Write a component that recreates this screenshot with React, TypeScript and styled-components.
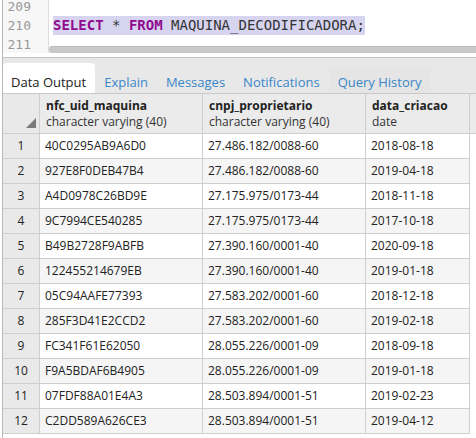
import React from "react";
import styled, { createGlobalStyle } from "styled-components";

const GlobalStyle = createGlobalStyle`
  html, body { margin: 0; padding: 0; background: #ffffff; }
  body { font-family: "Open Sans", "Noto Sans", sans-serif; }
`;

const Page = styled.div`
  margin-left: 2px;
  border-left: 1px solid #b8b8b8;
  height: 438px;
  overflow: hidden;
  display: flex;
  flex-direction: column;
`;

const Editor = styled.div`
  position: relative;
  height: 53px;
  display: flex;
  overflow: hidden;
  flex-shrink: 0;
`;

const Gutter = styled.div`
  width: 45px;
  background: #f7f7f7;
  border-right: 1px solid #dddddd;
  font-family: "DejaVu Sans Mono", "Liberation Mono", monospace;
  font-size: 13px;
  color: #999999;
`;

const GutterLines = styled.div`
  margin-top: -3px;
`;

const LineNo = styled.div`
  height: 19px;
  line-height: 19px;
  width: 28px;
  text-align: right;
`;

const Code = styled.div`
  flex: 1;
  padding-left: 4px;
  font-family: "DejaVu Sans Mono", "Liberation Mono", monospace;
  font-size: 14px;
  color: #333333;
`;

const CodeLines = styled.div`
  margin-top: -3px;
`;

const CodeLine = styled.div`
  height: 19px;
  line-height: 19px;
  white-space: pre;
`;

const Selected = styled.span`
  background: #d7d4f0;
  display: inline-block;
  height: 19px;
`;

const Keyword = styled.span`
  color: #8f0a8f;
  font-weight: bold;
`;

const HScroll = styled.div`
  position: absolute;
  left: 46px;
  right: 0;
  bottom: 0;
  height: 7px;
  background: #c8c8c8;
  border-top: 1px solid #bdbdbd;
  box-sizing: border-box;
  border-radius: 3px 0 0 3px;
`;

const Spacer = styled.div`
  height: 4px;
  flex-shrink: 0;
`;

const TabBar = styled.div`
  border-top: 1px solid #c4c4c4;
  background: #e8e8e8;
  height: 35px;
  display: flex;
  align-items: flex-end;
  flex-shrink: 0;
`;

const Tab = styled.div<{ $active?: boolean; $hover?: boolean }>`
  height: 30px;
  box-sizing: border-box;
  padding: 10px 9px 0 9px;
  line-height: 18px;
  font-size: 13px;
  white-space: nowrap;
  color: ${(p) => (p.$active ? "#222222" : "#3a86c8")};
  background: ${(p) =>
    p.$active
      ? "#ffffff"
      : p.$hover
      ? "linear-gradient(to bottom, transparent 5px, #e5e5e5 5px)"
      : "transparent"};
  border-radius: ${(p) => (p.$active ? "4px 4px 0 0" : "0")};
  padding-left: ${(p) => (p.$active ? "8px" : "9px")};
`;

const Grid = styled.div`
  border-top: 1px solid #c8c8c8;
  display: grid;
  grid-template-columns: 37px 163px 163px 104px 1fr;
  font-size: 12px;
  color: #222222;
`;

const HeadCell = styled.div<{ $filler?: boolean }>`
  background: #ebebeb;
  border-right: ${(p) => (p.$filler ? "none" : "1px solid #cfcfcf")};
  border-bottom: 1px solid #cfcfcf;
  padding: 4px 0 0 6px;
  height: 35px;
  line-height: 16px;
  overflow: hidden;
  white-space: nowrap;
`;

const CornerCell = styled.div`
  background: #e9e9e9;
  border-right: 1px solid #cfcfcf;
  border-bottom: 1px solid #cfcfcf;
  display: flex;
  align-items: flex-end;
  justify-content: flex-end;
  padding: 0 3px 5px 0;
  box-sizing: border-box;
  height: 40px;
`;

const ColName = styled.div`
  font-weight: bold;
`;

const ColType = styled.div`
  color: #333333;
`;

const RowNum = styled.div`
  background: #e9e9e9;
  border-right: 1px solid #cfcfcf;
  border-bottom: 1px solid #cfcfcf;
  height: 24px;
  line-height: 24px;
  text-align: center;
`;

const Cell = styled.div<{ $even: boolean; $filler?: boolean }>`
  background: ${(p) => (p.$filler ? "#ffffff" : p.$even ? "#f5f5f5" : "#ffffff")};
  border-right: ${(p) => (p.$filler ? "none" : "1px solid #cfcfcf")};
  border-bottom: ${(p) => (p.$filler ? "none" : "1px solid #cfcfcf")};
  height: 24px;
  line-height: 24px;
  padding-left: 5px;
  white-space: nowrap;
  overflow: hidden;
`;

const columns = [
  { name: "nfc_uid_maquina", type: "character varying (40)" },
  { name: "cnpj_proprietario", type: "character varying (40)" },
  { name: "data_criacao", type: "date" },
];

const rows: [string, string, string][] = [
  ["40C0295AB9A6D0", "27.486.182/0088-60", "2018-08-18"],
  ["927E8F0DEB47B4", "27.486.182/0088-60", "2019-04-18"],
  ["A4D0978C26BD9E", "27.175.975/0173-44", "2018-11-18"],
  ["9C7994CE540285", "27.175.975/0173-44", "2017-10-18"],
  ["B49B2728F9ABFB", "27.390.160/0001-40", "2020-09-18"],
  ["122455214679EB", "27.390.160/0001-40", "2019-01-18"],
  ["05C94AAFE77393", "27.583.202/0001-60", "2018-12-18"],
  ["285F3D41E2CCD2", "27.583.202/0001-60", "2019-02-18"],
  ["FC341F61E62050", "28.055.226/0001-09", "2018-09-18"],
  ["F9A5BDAF6B4905", "28.055.226/0001-09", "2019-01-18"],
  ["07FDF88A01E4A3", "28.503.894/0001-51", "2019-02-23"],
  ["C2DD589A626CE3", "28.503.894/0001-51", "2019-04-12"],
];

const tabs = ["Data Output", "Explain", "Messages", "Notifications", "Query History"];

export default function App() {
  return (
    <>
      <GlobalStyle />
      <Page>
        <Editor>
          <Gutter>
            <GutterLines>
              <LineNo>209</LineNo>
              <LineNo>210</LineNo>
              <LineNo>211</LineNo>
            </GutterLines>
          </Gutter>
          <Code>
            <CodeLines>
              <CodeLine> </CodeLine>
              <CodeLine>
                <Selected>
                  <Keyword>SELECT</Keyword> * <Keyword>FROM</Keyword> MAQUINA_DECODIFICADORA;
                </Selected>
              </CodeLine>
              <CodeLine> </CodeLine>
            </CodeLines>
          </Code>
          <HScroll />
        </Editor>
        <Spacer />
        <TabBar>
          {tabs.map((t, i) => (
            <Tab key={t} $active={i === 0} $hover={i === 4}>
              {t}
            </Tab>
          ))}
        </TabBar>
        <Grid>
          <CornerCell>
            <svg width="10" height="10" viewBox="0 0 10 10">
              <polygon points="10,0 10,10 0,10" fill="#7a7a7a" />
            </svg>
          </CornerCell>
          {columns.map((c) => (
            <HeadCell key={c.name}>
              <ColName>{c.name}</ColName>
              <ColType>{c.type}</ColType>
            </HeadCell>
          ))}
          <HeadCell $filler />
          {rows.map((r, i) => (
            <React.Fragment key={i}>
              <RowNum>{i + 1}</RowNum>
              {r.map((v, j) => (
                <Cell key={j} $even={i % 2 === 1}>
                  {v}
                </Cell>
              ))}
              <Cell $even={false} $filler />
            </React.Fragment>
          ))}
        </Grid>
      </Page>
    </>
  );
}
